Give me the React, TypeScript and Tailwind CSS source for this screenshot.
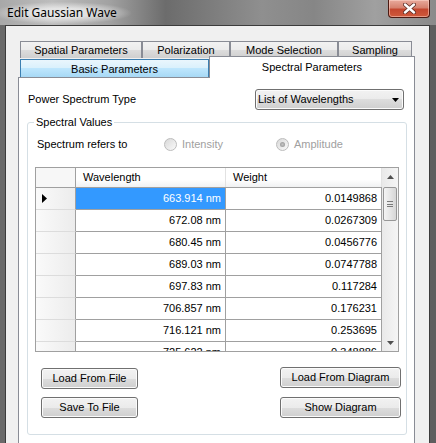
import clsx from "clsx";

const ROWS: [string, string][] = [
  ["663.914 nm", "0.0149868"],
  ["672.08 nm", "0.0267309"],
  ["680.45 nm", "0.0456776"],
  ["689.03 nm", "0.0747788"],
  ["697.83 nm", "0.117284"],
  ["706.857 nm", "0.176231"],
  ["716.121 nm", "0.253695"],
  ["725.622 nm", "0.348886"],
];

const BUTTON_BG =
  "bg-[linear-gradient(to_bottom,#f2f2f2_0%,#ebebeb_50%,#dddddd_50%,#cfcfcf_100%)]";

function WinButton({ label, className }: { label: string; className?: string }) {
  return (
    <button
      type="button"
      className={clsx(
        "h-[21px] rounded-[3px] border border-[#707070] text-[11px] leading-[13px] text-black shadow-[inset_0_0_0_1px_#fbfbfb]",
        BUTTON_BG,
        className
      )}
    >
      {label}
    </button>
  );
}

function Radio({ label, checked, className }: { label: string; checked?: boolean; className?: string }) {
  return (
    <div className={clsx("flex items-center", className)}>
      <span className="flex h-[13px] w-[13px] items-center justify-center rounded-full border border-[#bcbcbc] bg-[linear-gradient(135deg,#d8d8d8,#fafafa)]">
        {checked && (
          <span className="h-[5px] w-[5px] rounded-full bg-[radial-gradient(circle,#c4c4c4,#8e8e8e)]" />
        )}
      </span>
      <span className="ml-[5px] text-[#a0a0a0]">{label}</span>
    </div>
  );
}

function Tab({ label, width, className }: { label: string; width: string; className?: string }) {
  return (
    <div
      className={clsx(
        "flex items-center justify-center border-x border-t pt-[1px]",
        width,
        className
      )}
    >
      {label}
    </div>
  );
}

function Arrow({ dir }: { dir: "up" | "down" }) {
  return (
    <svg width="7" height="4" viewBox="0 0 7 4">
      <path d={dir === "up" ? "M3.5 0L7 4H0z" : "M0 0h7L3.5 4z"} fill="#505050" />
    </svg>
  );
}

function Scrollbar() {
  return (
    <div className="flex w-[16px] flex-col bg-[linear-gradient(to_right,#e9e9e9,#f5f5f5)]">
      <div className="flex h-[17px] items-center justify-center">
        <Arrow dir="up" />
      </div>
      <div className="ml-[1px] mt-[2px] flex h-[34px] w-[14px] flex-col items-center justify-center gap-[1.5px] rounded-[2px] border border-[#979797] bg-[linear-gradient(to_right,#f4f4f4,#e6e6e6_50%,#d6d6d6)]">
        <span className="h-px w-[6px] bg-[#7a7a7a]" />
        <span className="h-px w-[6px] bg-[#7a7a7a]" />
        <span className="h-px w-[6px] bg-[#7a7a7a]" />
      </div>
      <div className="mt-auto flex h-[17px] items-center justify-center">
        <Arrow dir="down" />
      </div>
    </div>
  );
}

function DataGrid() {
  return (
    <div className="ml-[7px] mt-[15px] flex h-[185px] w-[364px] border border-[#a0a0a0] bg-white">
      <div className="flex-1 overflow-hidden">
        <div className="flex h-[20px] border-b border-[#a0a0a0] bg-[linear-gradient(to_bottom,#ffffff_0%,#ffffff_60%,#f0f1f2_100%)]">
          <div className="w-[40px] border-r border-[#a0a0a0] bg-[#f7f7f7]" />
          <div className="flex w-[150px] items-center border-r border-[#e2e2e2] pl-[7px]">Wavelength</div>
          <div className="flex w-[156px] items-center border-r border-[#e2e2e2] pl-[7px]">Weight</div>
        </div>
        {ROWS.map(([wl, w], i) => (
          <div key={wl} className="flex h-[22px] shrink-0">
            <div className="flex w-[40px] items-center border-r border-b border-r-[#a0a0a0] border-b-[#dcdcdc] bg-[linear-gradient(to_right,#fafafa,#ececec)] pl-[6px]">
              {i === 0 && (
                <svg width="5" height="9" viewBox="0 0 5 9">
                  <path d="M0 0L5 4.5 0 9z" fill="#000" />
                </svg>
              )}
            </div>
            <div
              className={clsx(
                "flex w-[150px] items-center justify-end border-r border-b border-[#a0a0a0] pr-[4px]",
                i === 0 && "bg-[#3399ff] text-white"
              )}
            >
              {wl}
            </div>
            <div className="flex w-[156px] items-center justify-end border-r border-b border-[#a0a0a0] pr-[4px]">
              {w}
            </div>
          </div>
        ))}
      </div>
      <Scrollbar />
    </div>
  );
}

export default function App() {
  return (
    <div className="flex h-[443px] w-[436px] flex-col overflow-hidden bg-[linear-gradient(to_right,#6a6a6a,#5e5e5e)] font-['Liberation_Sans',Arial,sans-serif] text-[11px] leading-[13px] text-black">
      <div className="relative flex h-[25px] shrink-0 items-center bg-[linear-gradient(to_right,#a8a8a8_0%,#bdbdbd_12%,#a2a2a2_25%,#6c6c6c_38%,#7c7c7c_48%,#8f8f8f_60%,#868686_72%,#a0a0a0_86%,#8a8a8a_100%)] pl-[7px]">
        <span className="rounded-full bg-[radial-gradient(ellipse_at_center,rgba(235,235,235,0.85)_30%,rgba(220,220,220,0)_72%)] px-[14px] py-[3px] -ml-[14px] font-['Noto_Sans',sans-serif] text-[12px] leading-[16px] text-black">
          Edit Gaussian Wave
        </span>
        <div className="absolute right-[6px] top-0 flex h-[18px] w-[42px] items-center justify-center rounded-b-[4px] border border-t-0 border-[#4c1a12] bg-[linear-gradient(to_bottom,#e9aa9c_0%,#d6826f_45%,#c4472f_55%,#cf5a3c_100%)] shadow-[inset_0_0_0_1px_rgba(255,220,210,0.5)]">
          <svg width="13" height="11" viewBox="0 0 13 11">
            <path d="M2 1.5L11 9.5M11 1.5L2 9.5" stroke="#5a2a22" strokeWidth="4" strokeLinecap="round" />
            <path d="M2 1.5L11 9.5M11 1.5L2 9.5" stroke="#ffffff" strokeWidth="2.4" strokeLinecap="round" />
          </svg>
        </div>
      </div>

      <div className="ml-[5px] w-[425px] flex-1 border border-[#3c3c3c] bg-[#f0f0f0]">
        <div className="ml-[14px] mt-[15px] flex h-[17px]">
          <Tab label="Spatial Parameters" width="w-[122px]" className={clsx("border-[#898c95]", BUTTON_BG)} />
          <Tab label="Polarization" width="w-[88px]" className={clsx("border-[#898c95]", BUTTON_BG)} />
          <Tab label="Mode Selection" width="w-[108px]" className={clsx("border-[#898c95]", BUTTON_BG)} />
          <Tab label="Sampling" width="w-[74px]" className={clsx("border-[#898c95]", BUTTON_BG)} />
        </div>
        <div className="ml-[14px] flex h-[19px] items-start">
          <Tab
            label="Basic Parameters"
            width="w-[189px]"
            className="mt-[1px] h-[18px] border-[#3c7fb1] bg-[linear-gradient(to_bottom,#eaf6fd_0%,#d9f0fc_50%,#bee6fd_50%,#a7d9f5_100%)]"
          />
          <Tab
            label="Spectral Parameters"
            width="w-[206px]"
            className="relative z-10 -mt-[2px] h-[22px] border-[#898c95] bg-white pb-[1px]"
          />
        </div>

        <div className="ml-[12px] h-[400px] w-[397px] border border-[#898c95] bg-white">
          <div className="mt-[11px] flex h-[21px] items-center pl-[9px] pr-[10px]">
            <span>Power Spectrum Type</span>
            <div
              className={clsx(
                "ml-auto flex h-[21px] w-[149px] items-center rounded-[3px] border border-[#707070] pl-[2px] pr-[4px] shadow-[inset_0_0_0_1px_#fbfbfb]",
                BUTTON_BG
              )}
            >
              <span>List of Wavelengths</span>
              <svg className="ml-auto" width="7" height="4" viewBox="0 0 7 4">
                <path d="M0 0h7L3.5 4z" fill="#000" />
              </svg>
            </div>
          </div>

          <fieldset className="ml-[8px] mt-[6px] w-[380px] rounded-[3px] border border-[#d5dfe5] pb-[16px]">
            <legend className="ml-[6px] px-[2px] leading-[13px]">Spectral Values</legend>
            <div className="mt-[7px] flex h-[16px] items-center pl-[9px]">
              <span className="w-[127px]">Spectrum refers to</span>
              <Radio label="Intensity" className="w-[112px]" />
              <Radio label="Amplitude" checked />
            </div>

            <DataGrid />

            <div className="mt-[15px] flex items-start justify-between pl-[13px] pr-[5px]">
              <div className="flex flex-col gap-[9px]">
                <WinButton label="Load From File" className="mt-[1px] w-[97px]" />
                <WinButton label="Save To File" className="-mt-[1px] w-[97px]" />
              </div>
              <div className="flex flex-col gap-[9px]">
                <WinButton label="Load From Diagram" className="w-[121px]" />
                <WinButton label="Show Diagram" className="w-[121px]" />
              </div>
            </div>
          </fieldset>
        </div>
      </div>
    </div>
  );
}
